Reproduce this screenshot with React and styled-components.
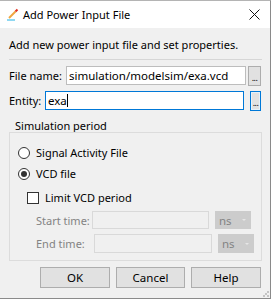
import styled, { createGlobalStyle } from "styled-components";

const Global = createGlobalStyle`
  html, body {
    margin: 0;
    background: #ffffff;
  }
  * {
    box-sizing: border-box;
  }
`;

const Window = styled.div`
  width: 271px;
  height: 299px;
  border-top: 1px solid #b4b4b4;
  border-right: 1px solid #8a8a8a;
  border-bottom: 1px solid #8a8a8a;
  display: flex;
  flex-direction: column;
  font-family: "Noto Sans", "Liberation Sans", sans-serif;
  font-size: 11px;
  color: #000;
`;

const TitleBar = styled.div`
  height: 27px;
  flex: none;
  background: #fff;
  display: flex;
  align-items: center;
  padding: 0 10px 0 7px;
  gap: 4px;
`;

const TitleText = styled.span`
  flex: 1;
  font-size: 11px;
`;

const Body = styled.div`
  flex: 1;
  background: #f0f0f0;
  padding: 10px 8px 0 9px;
  display: flex;
  flex-direction: column;
  position: relative;
`;

const Intro = styled.div`
  line-height: 14px;
`;

const Separator = styled.div`
  height: 1px;
  background: #d6d6d6;
  margin: 7px 0 6px;
`;

const FieldRow = styled.div`
  display: flex;
  align-items: center;
  height: 19px;
  margin-bottom: ${({ $gap }) => $gap || 0}px;
  gap: ${({ $inner }) => $inner}px;
`;

const Label = styled.span`
  width: ${({ $w }) => $w}px;
  flex: none;
  color: ${({ $disabled }) => ($disabled ? "#838383" : "#000")};
`;

const TextInput = styled.div`
  width: ${({ $w }) => $w}px;
  height: ${({ $h }) => $h || 19}px;
  flex: none;
  background: ${({ $disabled }) => ($disabled ? "#f0f0f0" : "#fff")};
  border: 1px solid
    ${({ $focus, $disabled }) =>
      $focus ? "#0078d7" : $disabled ? "#d9d9d9" : "#bdbdbd"};
  padding: 0 2px;
  display: flex;
  align-items: center;
  font-size: 11.5px;
`;

const Caret = styled.span`
  width: 1px;
  height: 13px;
  background: #000;
`;

const Spacer = styled.span`
  width: ${({ $w }) => $w}px;
  flex: none;
`;

const DotsButton = styled.div`
  width: ${({ $w }) => $w}px;
  height: 20px;
  flex: none;
  background: #e1e1e1;
  border: 1px solid ${({ $focus }) => ($focus ? "#0078d7" : "#adadad")};
  box-shadow: ${({ $focus }) => ($focus ? "inset 0 0 0 1px #e5f1fb" : "none")};
  display: flex;
  align-items: flex-end;
  justify-content: center;
  padding-bottom: 4px;
  font-size: 9px;
  line-height: 6px;
  letter-spacing: -0.5px;
`;

const GroupTitle = styled.div`
  margin-top: 9px;
  padding-left: 6px;
  line-height: 13px;
`;

const GroupFrame = styled.div`
  border: 1px solid #dcdcdc;
  height: 129px;
  padding: 9px 0 0 8px;
  display: flex;
  flex-direction: column;
`;

const OptionRow = styled.div`
  display: flex;
  align-items: center;
  height: 21px;
  gap: 6px;
  padding-left: ${({ $indent }) => $indent || 0}px;
  margin-top: ${({ $mt }) => $mt || 0}px;
`;

const Radio = styled.span`
  width: 12px;
  height: 12px;
  border-radius: 50%;
  border: 1px solid #333;
  background: #fff;
  display: flex;
  align-items: center;
  justify-content: center;
  &::after {
    content: "";
    width: 6px;
    height: 6px;
    border-radius: 50%;
    background: ${({ $checked }) => ($checked ? "#333" : "transparent")};
  }
`;

const Check = styled.span`
  width: 12px;
  height: 12px;
  border: 1px solid #333;
  background: #fff;
`;

const TimeRow = styled.div`
  display: flex;
  align-items: center;
  padding-left: 18px;
  height: ${({ $h }) => $h}px;
  margin-top: ${({ $mt }) => $mt}px;
`;

const Combo = styled.div`
  width: 36px;
  height: ${({ $h }) => $h}px;
  margin-left: 6px;
  background: #cccccc;
  color: #838383;
  display: flex;
  align-items: center;
  justify-content: space-between;
  padding: 0 5px 0 4px;
  font-size: 11.5px;
`;

const ComboArrow = styled.span`
  width: 0;
  height: 0;
  border-left: 2px solid transparent;
  border-right: 2px solid transparent;
  border-top: 2px solid #e6e6e6;
`;

const ButtonBar = styled.div`
  display: flex;
  justify-content: flex-end;
  gap: 6px;
  margin-top: 6px;
  padding-right: 1px;
`;

const Button = styled.div`
  width: ${({ $w }) => $w || 70}px;
  height: 21px;
  background: #e1e1e1;
  border: 1px solid #adadad;
  display: flex;
  align-items: center;
  justify-content: center;
  font-size: 11.5px;
`;

const Grip = styled.svg`
  position: absolute;
  right: 1px;
  bottom: 1px;
`;

function PencilIcon() {
  return (
    <svg width="12" height="14" viewBox="0 0 12 14">
      <rect x="0" y="11" width="8" height="2" fill="#8fd8f2" />
      <line x1="2" y1="10" x2="8.5" y2="3.5" stroke="#f0a640" strokeWidth="2" />
      <line x1="8.5" y1="3.5" x2="10.5" y2="1.5" stroke="#e03020" strokeWidth="2" />
    </svg>
  );
}

function CloseIcon() {
  return (
    <svg width="11" height="11" viewBox="0 0 11 11">
      <path d="M0.5 0.5 L10.5 10.5 M10.5 0.5 L0.5 10.5" stroke="#111" strokeWidth="1" />
    </svg>
  );
}

export default function App() {
  return (
    <>
      <Global />
      <Window>
        <TitleBar>
          <PencilIcon />
          <TitleText>Add Power Input File</TitleText>
          <CloseIcon />
        </TitleBar>
        <Body>
          <Intro>Add new power input file and set properties.</Intro>
          <Separator />
          <FieldRow $gap={6} $inner={2}>
            <Label $w={55}>File name:</Label>
            <TextInput $w={180}>simulation/modelsim/exa.vcd</TextInput>
            <DotsButton $w={13}>...</DotsButton>
          </FieldRow>
          <FieldRow $inner={0}>
            <Label $w={36}>Entity:</Label>
            <TextInput $w={199} $focus>
              exa
              <Caret />
            </TextInput>
            <Spacer $w={6} />
            <DotsButton $w={11} $focus>
              ...
            </DotsButton>
          </FieldRow>
          <GroupTitle>Simulation period</GroupTitle>
          <GroupFrame>
            <OptionRow>
              <Radio />
              Signal Activity File
            </OptionRow>
            <OptionRow>
              <Radio $checked />
              VCD file
            </OptionRow>
            <OptionRow $indent={9} $mt={3}>
              <Check />
              Limit VCD period
            </OptionRow>
            <TimeRow $h={18} $mt={3}>
              <Label $w={56} $disabled>
                Start time:
              </Label>
              <TextInput $w={117} $h={18} $disabled />
              <Combo $h={18}>
                ns
                <ComboArrow />
              </Combo>
            </TimeRow>
            <TimeRow $h={19} $mt={5}>
              <Label $w={58} $disabled>
                End time:
              </Label>
              <TextInput $w={118} $h={19} $disabled />
              <Combo $h={19}>
                ns
                <ComboArrow />
              </Combo>
            </TimeRow>
          </GroupFrame>
          <ButtonBar>
            <Button>OK</Button>
            <Button $w={69}>Cancel</Button>
            <Button>Help</Button>
          </ButtonBar>
          <Grip width="6" height="6" viewBox="0 0 6 6">
            <rect x="4" y="0" width="2" height="2" fill="#c4c4c4" />
            <rect x="0" y="4" width="2" height="2" fill="#c4c4c4" />
            <rect x="4" y="4" width="2" height="2" fill="#c4c4c4" />
            <rect x="2" y="2" width="2" height="2" fill="#c4c4c4" />
          </Grip>
        </Body>
      </Window>
    </>
  );
}
